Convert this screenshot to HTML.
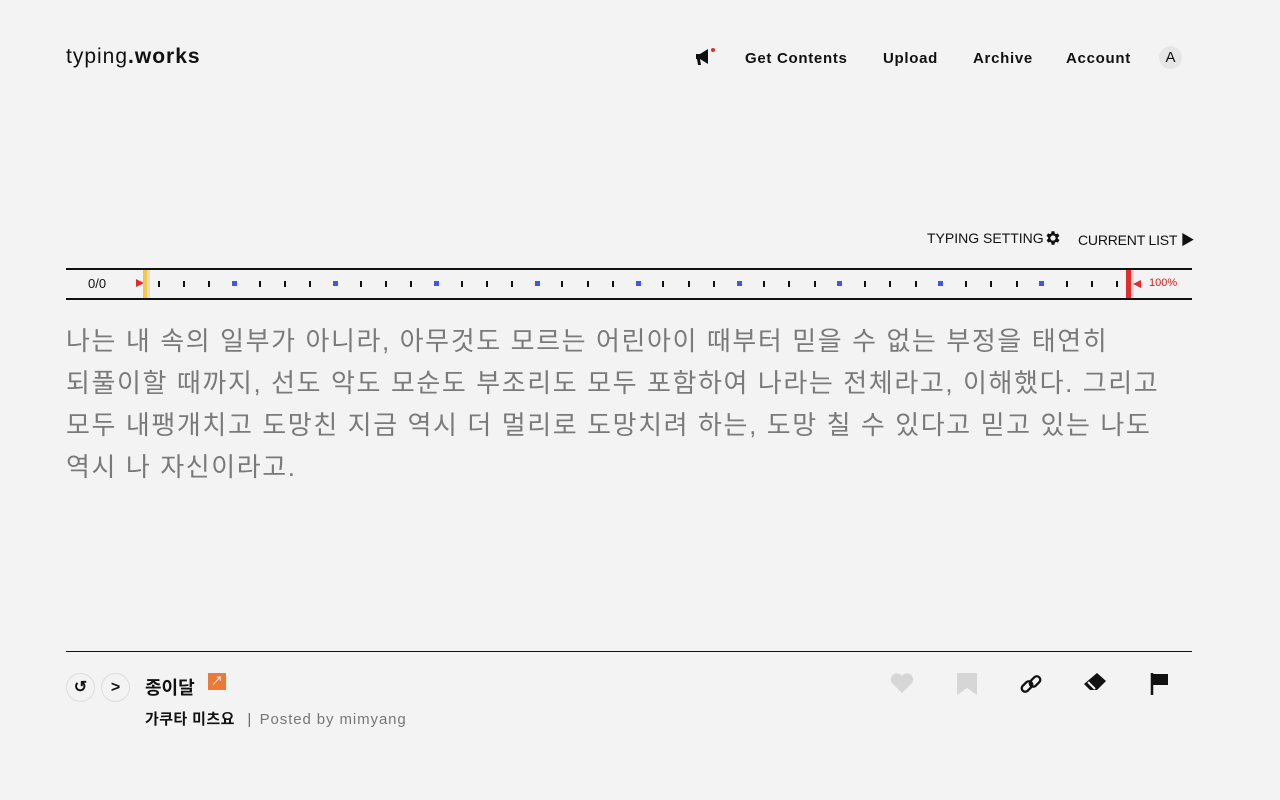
<!DOCTYPE html>
<html><head><meta charset="utf-8"><style>
*{margin:0;padding:0;box-sizing:border-box}
body{width:1280px;height:800px;background:#f3f3f3;font-family:"Liberation Sans","Noto Sans CJK KR",sans-serif;color:#111;position:relative;overflow:hidden}
.a{position:absolute}
.nav{font-size:15px;font-weight:bold;letter-spacing:0.7px;top:50px}
.tk{position:absolute;top:281px;width:2px;height:6px;background:#111}
.bl{position:absolute;top:281px;width:5px;height:5px;background:#4257e8}
</style></head><body>
<div class="a" style="left:66px;top:45px;font-size:21px;letter-spacing:1px">typing<b>.works</b></div>
<svg class="a" style="left:695px;top:47px" width="22" height="20" viewBox="0 0 22 20"><path d="M1 7h4l8-5v15l-8-5H5l1 6H3l-1-6H1z" fill="#111"/><circle cx="18" cy="3" r="2" fill="#e52b2b"/></svg>
<div class="a nav" style="left:745px">Get Contents</div>
<div class="a nav" style="left:883px">Upload</div>
<div class="a nav" style="left:973px">Archive</div>
<div class="a nav" style="left:1066px">Account</div>
<div class="a" style="left:1159px;top:46px;width:23px;height:23px;border-radius:50%;background:#e6e6e6;font-size:15px;text-align:center;line-height:23px">A</div>

<div class="a" style="left:927px;top:230px;font-size:14px">TYPING SETTING</div>
<svg class="a" style="left:1044px;top:229px" width="18" height="18" viewBox="0 0 24 24"><path fill="#111" d="M19.4 13a7.5 7.5 0 000-2l2.1-1.6-2-3.5-2.5 1a7 7 0 00-1.7-1L15 3h-4l-.4 2.9a7 7 0 00-1.7 1l-2.5-1-2 3.5L6.6 11a7.5 7.5 0 000 2l-2.1 1.6 2 3.5 2.5-1a7 7 0 001.7 1L11 21h4l.4-2.9a7 7 0 001.7-1l2.5 1 2-3.5zM13 15.5a3.5 3.5 0 110-7 3.5 3.5 0 010 7z" transform="translate(-1 0)"/></svg>
<div class="a" style="left:1078px;top:230px;font-size:14px;letter-spacing:-0.2px">CURRENT LIST ▶</div>

<div class="a" style="left:66px;top:268px;width:1126px;height:2px;background:#111"></div>
<div class="a" style="left:66px;top:298px;width:1126px;height:2px;background:#111"></div>
<div class="a" style="left:88px;top:276px;font-size:13px">0/0</div>
<div class="a" style="left:136px;top:279px;width:0;height:0;border-left:8px solid #e52b2b;border-top:4px solid transparent;border-bottom:4px solid transparent"></div>
<div class="a" style="left:143px;top:270px;width:4px;height:28px;background:#f5c842"></div>
<div class="a" style="left:147px;top:270px;width:3px;height:28px;background:#ddd"></div>
<div class="a" style="left:1126px;top:270px;width:5px;height:28px;background:#e52b2b"></div>
<div class="a" style="left:1131px;top:270px;width:3px;height:28px;background:#ddd"></div>
<div class="a" style="left:1133px;top:280px;width:0;height:0;border-right:8px solid #e52b2b;border-top:4px solid transparent;border-bottom:4px solid transparent"></div>
<div class="a" style="left:1149px;top:277px;font-size:11px;color:#d42020">100%</div>
<div class="tk" style="left:158px"></div><div class="tk" style="left:183px"></div><div class="tk" style="left:208px"></div><div class="bl" style="left:232px"></div>
<div class="tk" style="left:259px"></div><div class="tk" style="left:284px"></div><div class="tk" style="left:309px"></div><div class="bl" style="left:333px"></div>
<div class="tk" style="left:360px"></div><div class="tk" style="left:385px"></div><div class="tk" style="left:410px"></div><div class="bl" style="left:434px"></div>
<div class="tk" style="left:461px"></div><div class="tk" style="left:486px"></div><div class="tk" style="left:511px"></div><div class="bl" style="left:535px"></div>
<div class="tk" style="left:561px"></div><div class="tk" style="left:587px"></div><div class="tk" style="left:612px"></div><div class="bl" style="left:636px"></div>
<div class="tk" style="left:662px"></div><div class="tk" style="left:688px"></div><div class="tk" style="left:713px"></div><div class="bl" style="left:737px"></div>
<div class="tk" style="left:763px"></div><div class="tk" style="left:788px"></div><div class="tk" style="left:814px"></div><div class="bl" style="left:837px"></div>
<div class="tk" style="left:864px"></div><div class="tk" style="left:889px"></div><div class="tk" style="left:915px"></div><div class="bl" style="left:938px"></div>
<div class="tk" style="left:965px"></div><div class="tk" style="left:990px"></div><div class="tk" style="left:1016px"></div><div class="bl" style="left:1039px"></div>
<div class="tk" style="left:1066px"></div><div class="tk" style="left:1091px"></div><div class="tk" style="left:1116px"></div>

<div class="a" style="left:66px;top:320px;font-size:26px;line-height:42px;color:#7a7a7a;white-space:nowrap;letter-spacing:1.6px">나는 내 속의 일부가 아니라, 아무것도 모르는 어린아이 때부터 믿을 수 없는 부정을 태연히<br>되풀이할 때까지, 선도 악도 모순도 부조리도 모두 포함하여 나라는 전체라고, 이해했다. 그리고<br>모두 내팽개치고 도망친 지금 역시 더 멀리로 도망치려 하는, 도망 칠 수 있다고 믿고 있는 나도<br>역시 나 자신이라고.</div>

<div class="a" style="left:66px;top:651px;width:1126px;height:1px;background:#111"></div>
<div class="a" style="left:66px;top:673px;width:29px;height:29px;border-radius:50%;border:1px solid #ddd;text-align:center;line-height:27px;font-size:16px;font-weight:bold">↺</div>
<div class="a" style="left:101px;top:673px;width:29px;height:29px;border-radius:50%;border:1px solid #ddd;text-align:center;line-height:27px;font-size:16px;font-weight:bold">&gt;</div>
<div class="a" style="left:145px;top:674px;font-size:18px;font-weight:bold">종이달</div>
<div class="a" style="left:208px;top:673px;width:18px;height:17px;background:#ec7a36;color:#fff;font-size:12px;text-align:center;line-height:17px">↗</div>
<div class="a" style="left:145px;top:708px;font-size:15px;font-weight:bold;letter-spacing:0.4px">가쿠타 미츠요 <span style="font-weight:normal;color:#666;margin:0 8px">|</span><span style="font-weight:normal;color:#777;letter-spacing:0.9px">Posted by mimyang</span></div>

<svg class="a" style="left:890px;top:672px" width="24" height="22" viewBox="0 0 24 22"><path d="M12 21L2 11A5.5 5.5 0 0112 4a5.5 5.5 0 0110 7z" fill="#d6d6d6"/></svg>
<svg class="a" style="left:956px;top:672px" width="22" height="24" viewBox="0 0 22 24"><path d="M1 1h20v22l-10-7-10 7z" fill="#d6d6d6"/></svg>
<svg class="a" style="left:1019px;top:672px" width="24" height="24" viewBox="0 0 24 24" fill="none" stroke="#111" stroke-width="2.3"><rect x="2" y="11" width="12" height="7" rx="3.5" transform="rotate(-45 8 14.5)"/><rect x="10" y="6" width="12" height="7" rx="3.5" transform="rotate(-45 16 9.5)"/></svg>
<svg class="a" style="left:1083px;top:672px" width="24" height="22" viewBox="0 0 24 22"><path d="M14 1l9 8-9 9H7l-6-6z" fill="#111"/><path d="M5 10l7 7" stroke="#f3f3f3" stroke-width="2"/></svg>
<svg class="a" style="left:1150px;top:672px" width="20" height="24" viewBox="0 0 20 24"><path d="M2 1v22" stroke="#111" stroke-width="2.5"/><path d="M3 2h15v11H3z" fill="#111"/></svg>
</body></html>
